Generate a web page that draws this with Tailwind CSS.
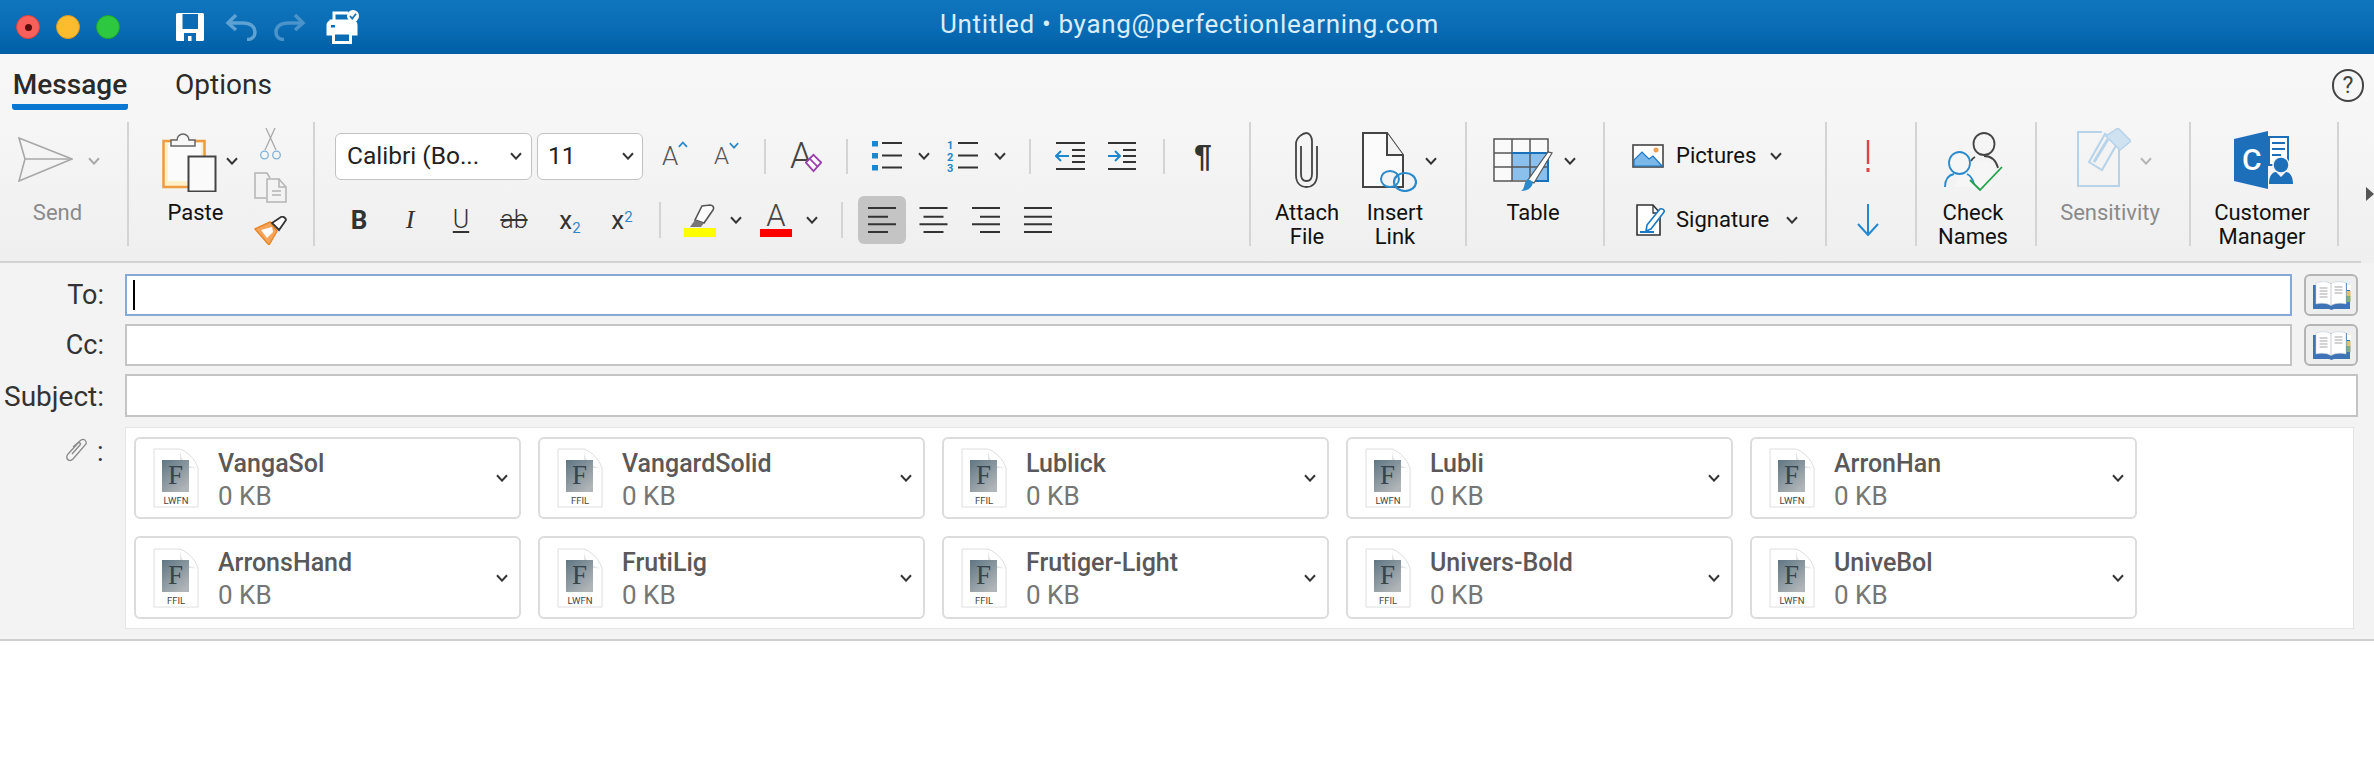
<!DOCTYPE html>
<html lang="en">
<head>
  <meta charset="UTF-8" />
  <title>Untitled • byang@perfectionlearning.com</title>
  <script src="https://cdn.jsdelivr.net/npm/@tailwindcss/browser@4"></script>
</head>
<body class="w-[2374px] h-[776px] overflow-hidden bg-white font-['Roboto',sans-serif] text-[#222]">

  <!-- shared icons -->
  <svg class="absolute w-0 h-0">
    <symbol id="chev" viewBox="0 0 12 8"><path d="M1 1.200 6 6.600 11 1.200" fill="none" stroke="currentColor" stroke-width="2"/></symbol>
    <symbol id="book" viewBox="0 0 39 29">
      <path d="M1 4h3v-2h31v2h3v24H22l-2.500 1-2.500-1H1z" fill="#3e74b5"/>
      <path d="M4 23V2c5-2 11-1.500 15 .5 4-2 10-2.500 15-.5v21c-5-1.500-11-1-15 1.500C15 22 9 21.500 4 23z" fill="#fff" stroke="#c8d0d8" stroke-width=".6"/>
      <path d="M19 2.500v22" stroke="#b9bec4" stroke-width=".8"/>
      <path d="M7.500 7h8M7.500 10h8M7.500 13h8M7.500 16h8M22.500 6h8M22.500 9h8M22.500 12h8" stroke="#c4c4c4" stroke-width="1.300"/>
      <rect x="35" y="4" width="4" height="5" fill="#fff"/><rect x="34.500" y="10" width="4" height="5" fill="#d8c46a"/><rect x="34.500" y="15" width="4" height="6" fill="#7fae7c"/>
    </symbol>
    <symbol id="align-left" viewBox="0 0 28 26"><path d="M0 1h28M0 9.700h20M0 17.300h28M0 25h20" stroke="#333" stroke-width="2"/></symbol>
    <symbol id="align-center" viewBox="0 0 28 26"><path d="M0 1h28M4 9.700h20M0 17.300h28M4 25h20" stroke="#333" stroke-width="2"/></symbol>
    <symbol id="align-right" viewBox="0 0 28 26"><path d="M0 1h28M8 9.700h20M0 17.300h28M8 25h20" stroke="#333" stroke-width="2"/></symbol>
    <symbol id="align-full" viewBox="0 0 28 26"><path d="M0 1h28M0 9.700h28M0 17.300h28M0 25h28" stroke="#333" stroke-width="2"/></symbol>
    <linearGradient id="fgrad" x1="0" y1="0" x2=".7" y2="1"><stop offset="0" stop-color="#5f7683"/><stop offset="1" stop-color="#b0b5b8"/></linearGradient>
  </svg>

  <!-- title bar -->
  <header class="relative h-[54px] flex items-center bg-gradient-to-b from-[#0f76bd] via-[#0a6cb5] to-[#005fa5]">
    <div class="flex items-center gap-[16px] ml-[16px]">
      <div class="w-[24px] h-[24px] rounded-full bg-[#f9605c] border border-[#d8403c] flex items-center justify-center"><div class="w-[7px] h-[7px] rounded-full bg-[#5a0d0a]"></div></div>
      <div class="w-[24px] h-[24px] rounded-full bg-[#fdbb2e] border border-[#d99a1e]"></div>
      <div class="w-[24px] h-[24px] rounded-full bg-[#2ec840] border border-[#1ca42e]"></div>
    </div>
    <!-- save -->
    <svg class="ml-[56px]" width="28" height="28" viewBox="0 0 28 28"><path d="M1.500 0h25A1.500 1.500 0 0 1 28 1.500V26.500A1.500 1.500 0 0 1 26.500 28H1.500A1.500 1.500 0 0 1 0 26.500V1.500A1.500 1.500 0 0 1 1.500 0z" fill="#fff"/><rect x="6.500" y="1" width="15.500" height="15" fill="#0b6cb5"/><rect x="8" y="20" width="12" height="8" fill="#0b6cb5"/><rect x="12" y="23" width="3.500" height="5" fill="#fff"/></svg>
    <!-- undo / redo -->
    <svg class="ml-[21px]" width="32" height="28" viewBox="0 0 32 28" fill="none" stroke="#5ea2d3" stroke-width="3.500"><path d="M11 2 3 10l8 7"/><path d="M3 10h15c7 0 12 3.500 12 9 0 5-3.500 7.500-8 7.500"/></svg>
    <svg class="ml-[17px]" width="32" height="28" viewBox="0 0 32 28" fill="none" stroke="#4a93cb" stroke-width="3.500"><path d="M21 2l8 8-8 7"/><path d="M29 10H14C7 10 2 13.500 2 19c0 5 3.500 7.500 8 7.500"/></svg>
    <!-- print -->
    <svg class="ml-[19px]" width="34" height="34" viewBox="0 0 34 34" fill="none" stroke="#fff" stroke-width="3"><path d="M9 11V3h14"/><path d="M6 11h21a4 4 0 0 1 4 4v9H3v-9a3 3 0 0 1 3-3z" fill="#fff"/><rect x="8.500" y="23" width="17" height="9.500" fill="#0a6cb5"/><rect x="6" y="15" width="4" height="2.500" fill="#0a6cb5" stroke="none"/><circle cx="28" cy="6" r="6" fill="#fff" stroke="none"/><path d="M25 6l2.200 2.500L31 3.800" stroke="#1673b8" stroke-width="1.800"/></svg>
    <div class="absolute left-[940px] top-[10px] text-[26px] leading-[28px] tracking-[.68px] text-[#d9edfb]">Untitled • byang@perfectionlearning.com</div>
  </header>

  <div class="bg-[#f3f3f3]">
    <!-- tabs -->
    <nav class="h-[68px] flex bg-gradient-to-b from-[#f7f7f7] to-[#f6f6f6]">
      <div class="ml-[12px] w-[116px] h-[56px] pt-[17px] border-b-[6px] border-[#0a78d0] rounded-b-[3px] text-[28px] leading-[28px] font-medium text-center text-[#2a2a2a]">Message</div>
      <div class="ml-[47px] pt-[17px] text-[28px] leading-[28px] text-[#2a2a2a]">Options</div>
      <div class="ml-auto mr-[10px] mt-[15px] w-[32px] h-[33px] rounded-full border-2 border-[#444] flex items-center justify-center text-[23px] text-[#444] leading-none">?</div>
    </nav>

    <!-- ribbon -->
    <section class="h-[141px] flex bg-gradient-to-b from-[#f6f6f6] to-[#efefef] text-[22px] leading-[24px] text-[#111]">
      <!-- send -->
      <div class="w-[129px] h-[124px] border-r-2 border-[#d4d4d4] flex flex-col">
        <div class="h-[79px] shrink-0 flex items-start pl-[18px] pt-[15px] text-[#a8a8a8]">
          <svg width="55" height="45" viewBox="0 0 55 45" fill="none" stroke="#a8a8a8" stroke-width="1.600"><path d="M1 1 54 22 1 44 7 22z"/><path d="M7 22h47"/></svg>
          <svg class="ml-[15px] mt-[20px]" width="12" height="8"><use href="#chev"/></svg>
        </div>
        <div class="w-[115px] text-center text-[#8a8a8a]">Send</div>
      </div>
      <!-- clipboard -->
      <div class="w-[186px] h-[124px] border-r-2 border-[#d4d4d4] flex">
        <div class="w-[125px] pl-[33px] flex flex-col">
          <div class="h-[79px] shrink-0 flex items-start pt-[10px]">
            <svg width="55" height="60" viewBox="0 0 55 60"><rect x="1.500" y="9" width="41" height="46" fill="#fdf1cc" stroke="#ee9a3f" stroke-width="2.500"/><rect x="6" y="11" width="33" height="38" fill="#fbfbfb"/><path d="M9 14V8h6a6 6 0 0 1 12 0h6v6z" fill="#f7f7f7" stroke="#666" stroke-width="1.500"/><rect x="26.500" y="24.500" width="27" height="35" fill="#fafafa" stroke="#444" stroke-width="2"/></svg>
            <svg class="ml-[9px] mt-[25px] text-[#333]" width="12" height="8"><use href="#chev"/></svg>
          </div>
          <div class="w-[67px] text-center">Paste</div>
        </div>
        <div class="flex flex-col pt-[6px]">
          <svg class="ml-[6px] shrink-0" width="21" height="32" viewBox="0 0 21 32" fill="none" stroke-width="1.300"><path d="M5 22 15 0M16 22 6 0" stroke="#aaa"/><circle cx="4.500" cy="27" r="3.800" stroke="#7fb2da"/><circle cx="16.500" cy="27" r="3.800" stroke="#7fb2da"/></svg>
          <svg class="mt-[12px] shrink-0" width="33" height="31" viewBox="0 0 33 31" fill="none" stroke="#b4b4b4" stroke-width="1.500"><path d="M12 26H1V1h12l3 5"/><path d="M13 7h12l7 8v15H13z" fill="#f3f3f3"/><path d="M25 7v8h7M18 19h9M18 23h9" /></svg>
          <svg class="mt-[13px] shrink-0" width="33" height="29" viewBox="0 0 33 29"><path d="M1 13 16 6l7 9-8 14z" fill="#f4a55b" stroke="#e9872a" stroke-width="1.500"/><path d="M7 14l11-3 1 5-6 6z" fill="#fff"/><path d="M18 7 27 1c2-1 5 1 5 3l-7 10z" fill="#fff" stroke="#333" stroke-width="1.800"/></svg>
        </div>
      </div>
      <!-- font / paragraph -->
      <div class="w-[936px] h-[124px] border-r-2 border-[#d4d4d4] pl-[20px] flex flex-col">
        <div class="h-[68px] shrink-0 flex items-center">
          <div class="w-[197px] h-[47px] rounded-[6px] bg-white border border-[#c2c2c2] flex items-center pl-[11px] pr-[9px] text-[24.500px] text-[#222]">Calibri (Bo...<svg class="ml-auto text-[#333]" width="12" height="8"><use href="#chev"/></svg></div>
          <div class="ml-[5px] w-[106px] h-[47px] rounded-[6px] bg-white border border-[#c2c2c2] flex items-center pl-[10px] pr-[8px] text-[24.500px] text-[#222]">11<svg class="ml-auto text-[#333]" width="12" height="8"><use href="#chev"/></svg></div>
          <div class="ml-[19px] w-[26px] flex items-start text-[#555] text-[26px] font-light leading-none">A<svg class="mt-[-2px] text-[#2b8acb]" width="10" height="7" viewBox="0 0 12 8"><path d="M1 7 6 1.500 11 7" fill="none" stroke="currentColor" stroke-width="2.200"/></svg></div>
          <div class="ml-[26px] w-[26px] flex items-start text-[#555] text-[24px] font-light leading-none">A<svg class="mt-[-2px] text-[#2b8acb]" width="10" height="7"><use href="#chev"/></svg></div>
          <div class="ml-[24px] w-[2px] h-[35px] bg-[#d4d4d4]"></div>
          <div class="relative ml-[24px] w-[32px] h-[34px] text-[#444] text-[36px] font-light leading-[34px]">A<svg class="absolute left-[15px] top-[14px]" width="17" height="20" viewBox="0 0 20 21"><path d="M10 1 19 10 10 20 1 10z" fill="#fff" stroke="#9a3fb0" stroke-width="2.200"/><path d="M6 6l9 9" stroke="#9a3fb0" stroke-width="2"/></svg></div>
          <div class="ml-[24px] w-[2px] h-[35px] bg-[#d4d4d4]"></div>
          <!-- bullets -->
          <svg class="ml-[24px]" width="30" height="32" viewBox="0 0 30 32"><path d="M0 1h6v5.500H0zM0 13h6v5.500H0zM0 25h6v5.500H0z" fill="#1d86cc"/><path d="M10 3h20M10 15.500h20M10 27.500h20" stroke="#333" stroke-width="2"/></svg>
          <svg class="ml-[16px] text-[#333]" width="12" height="8"><use href="#chev"/></svg>
          <svg class="ml-[17px] mt-[6px]" width="31" height="38" viewBox="0 0 31 38"><text x="0" y="9" font-size="11" font-weight="700" font-family="Roboto" fill="#1d86cc">1</text><text x="0" y="21" font-size="11" font-weight="700" font-family="Roboto" fill="#1d86cc">2</text><text x="0" y="32" font-size="11" font-weight="700" font-family="Roboto" fill="#1d86cc">3</text><path d="M11 3h20M11 15.500h20M11 27.500h20" stroke="#333" stroke-width="2"/></svg>
          <svg class="ml-[16px] text-[#333]" width="12" height="8"><use href="#chev"/></svg>
          <div class="ml-[23px] w-[2px] h-[35px] bg-[#d4d4d4]"></div>
          <!-- indent -->
          <svg class="ml-[24px]" width="30" height="28" viewBox="0 0 30 28"><path d="M1 1h29M17 14h13M17 8h13M17 20h13M1 27h29" stroke="#333" stroke-width="2"/><path d="M14 14H1M6 9l-5 5 5 5" fill="none" stroke="#1d86cc" stroke-width="2"/></svg>
          <svg class="ml-[23px]" width="28" height="28" viewBox="0 0 28 28"><path d="M0 1h28M15 14h13M15 8h13M15 20h13M0 27h28" stroke="#333" stroke-width="2"/><path d="M0 14h12M7 9l5 5-5 5" fill="none" stroke="#1d86cc" stroke-width="2"/></svg>
          <div class="ml-[27px] w-[2px] h-[35px] bg-[#d4d4d4]"></div>
          <div class="ml-[26px] w-[24px] text-center text-[32px] leading-none font-bold text-[#333] font-['Liberation_Sans',sans-serif]">¶</div>
        </div>
        <div class="h-[60px] shrink-0 flex items-center text-[#333]">
          <div class="ml-[5px] w-[38px] text-center text-[26px] font-bold">B</div>
          <div class="ml-[13px] w-[38px] text-center text-[26px] italic font-['Liberation_Serif',serif]">I</div>
          <div class="ml-[13px] w-[38px] text-center text-[25px] font-light underline underline-offset-[3px]">U</div>
          <div class="ml-[15px] w-[38px] text-center text-[25px] font-light line-through">ab</div>
          <div class="ml-[18px] w-[38px] text-center text-[26px]">x<sub class="text-[15px] text-[#2b8acb]">2</sub></div>
          <div class="ml-[14px] w-[38px] text-center text-[26px]">x<sup class="text-[15px] text-[#2b8acb]">2</sup></div>
          <div class="ml-[18px] w-[2px] h-[36px] bg-[#d4d4d4]"></div>
          <svg class="ml-[23px]" width="32" height="33" viewBox="0 0 32 33"><path d="M18 2 26 1c2 0 5 2 3 5l-9 13-9-3z" fill="#fff" stroke="#555" stroke-width="1.600"/><path d="M11 16l9 3-3 4-11 0z" fill="#777"/><rect x="0" y="24" width="32" height="9" fill="#ffff00"/></svg>
          <svg class="ml-[14px]" width="12" height="8"><use href="#chev"/></svg>
          <div class="ml-[18px] w-[32px] flex flex-col items-center text-[31px] font-light leading-[26px] text-[#444]">A<div class="w-[32px] h-[8px] bg-[#ff0000]"></div></div>
          <svg class="ml-[14px]" width="12" height="8"><use href="#chev"/></svg>
          <div class="ml-[23px] w-[2px] h-[36px] bg-[#d4d4d4]"></div>
          <div class="ml-[15px] w-[48px] h-[48px] rounded-[6px] bg-[#c4c4c4] flex items-center justify-center"><svg width="28" height="26"><use href="#align-left"/></svg></div>
          <svg class="ml-[13px]" width="29" height="26"><use href="#align-center"/></svg>
          <svg class="ml-[24px]" width="28" height="26"><use href="#align-right"/></svg>
          <svg class="ml-[24px]" width="28" height="26"><use href="#align-full"/></svg>
        </div>
      </div>
      <!-- attach / link -->
      <div class="w-[216px] h-[124px] border-r-2 border-[#d4d4d4] flex pl-[16px]">
        <div class="w-[88px] flex flex-col">
          <div class="h-[79px] shrink-0 pt-[10px] pl-[28px]"><svg width="23" height="56" viewBox="0 0 23 56" fill="none" stroke="#444" stroke-width="1.800"><path d="M6 14v28c0 5 2.500 7 5.500 7s5.500-2 5.500-7V9C17 5 14.500 1 11.500 1S1 5 1 12v31c0 8 4.500 12 10.500 12S22 51 22 43V14"/></svg></div>
          <div class="w-[80px] text-center">Attach<br>File</div>
        </div>
        <div class="w-[90px] flex flex-col">
          <div class="h-[79px] shrink-0 pt-[10px] pl-[7px] flex items-start">
            <svg width="55" height="60" viewBox="0 0 55 60" fill="none"><path d="M1 1h24l16 22v32H1z" fill="#fbfbfb" stroke="#444" stroke-width="2"/><path d="M25 1v22h16" stroke="#444" stroke-width="2" fill="#f3f3f3"/><ellipse cx="28" cy="47" rx="9" ry="8" fill="#f3f3f3" stroke="#2b8acb" stroke-width="2"/><ellipse cx="43" cy="50" rx="11" ry="9" fill="none" stroke="#2b8acb" stroke-width="2.200"/></svg>
            <svg class="ml-[8px] mt-[25px] text-[#333]" width="12" height="8"><use href="#chev"/></svg>
          </div>
          <div class="w-[80px] text-center">Insert<br>Link</div>
        </div>
      </div>
      <!-- table -->
      <div class="w-[138px] h-[124px] border-r-2 border-[#d4d4d4] pl-[26px] flex flex-col">
        <div class="h-[79px] shrink-0 pt-[16px] flex items-start">
          <svg width="61" height="54" viewBox="0 0 61 54"><rect x="1" y="1" width="54" height="42" fill="#fafafa"/><rect x="19" y="15" width="35" height="27" fill="#8cc0ec"/><path d="M1 1h54v42H1zM19 1v42M37 1v42M1 15h54M1 29h54" fill="none" stroke="#555" stroke-width="1.500"/><path d="M19 15h36v28H37" fill="none" stroke="#1b70ba" stroke-width="2"/><path d="M59 15 41 45l-6-3L55 14z" fill="#fff" stroke="#555" stroke-width="1.200"/><path d="M28 53c5 0 11-2 12-9l-5-3c-5 3-2 9-7 12z" fill="#2b8acb"/></svg>
          <svg class="ml-[10px] mt-[19px] text-[#333]" width="12" height="8"><use href="#chev"/></svg>
        </div>
        <div class="w-[80px] text-center">Table</div>
      </div>
      <!-- pictures / signature -->
      <div class="w-[222px] h-[124px] border-r-2 border-[#d4d4d4] flex flex-col">
        <div class="h-[68px] shrink-0 flex items-center pl-[27px]">
          <svg width="32" height="24" viewBox="0 0 32 24"><rect x="1" y="1" width="30" height="22" fill="#fff" stroke="#444" stroke-width="1.600"/><path d="M2 22V16l8-8 7 7 4-3 9 10z" fill="#7ab8ea" stroke="#1d78c4" stroke-width="1.200"/><circle cx="24" cy="6" r="2.500" fill="#f0a050"/></svg>
          <span class="ml-[12px]">Pictures</span>
          <svg class="ml-[14px] text-[#333]" width="12" height="8"><use href="#chev"/></svg>
        </div>
        <div class="h-[60px] shrink-0 flex items-center pl-[31px]">
          <svg width="29" height="32" viewBox="0 0 29 32"><path d="M1 1h16l7 8v22H1z" fill="#fff" stroke="#333" stroke-width="1.600"/><path d="M17 1v8h7" fill="none" stroke="#333" stroke-width="1.300"/><path d="M11 21 24 5c2-1 5 1 4 3L15 25l-5 2z" fill="#fff" stroke="#1d78c4" stroke-width="1.600"/><path d="M4 28h14" stroke="#1d78c4" stroke-width="2"/></svg>
          <span class="ml-[11px]">Signature</span>
          <svg class="ml-[17px] text-[#333]" width="12" height="8"><use href="#chev"/></svg>
        </div>
      </div>
      <!-- importance -->
      <div class="w-[90px] h-[124px] border-r-2 border-[#d4d4d4] flex flex-col pl-[30px]">
        <div class="h-[68px] shrink-0 flex items-center"><svg width="22" height="32" viewBox="0 0 22 32"><path d="M11 0v24" stroke="#e04343" stroke-width="2.400"/><path d="M11 28v4" stroke="#e04343" stroke-width="3"/></svg></div>
        <div class="h-[60px] shrink-0 flex items-center"><svg width="22" height="32" viewBox="0 0 22 32" fill="none" stroke="#2288cf" stroke-width="2"><path d="M11 0v31M1 20l10 11 10-11"/></svg></div>
      </div>
      <!-- check names -->
      <div class="w-[120px] h-[124px] border-r-2 border-[#d4d4d4] flex flex-col">
        <div class="w-[112px] h-[79px] shrink-0 pt-[10px] flex justify-center">
          <svg width="59" height="60" viewBox="0 0 59 60" fill="none"><ellipse cx="40" cy="12" rx="10.500" ry="11" stroke="#444" stroke-width="1.800"/><path d="M26 33c8-6 22-6 26 4l-5 9-8 9H10l6-12z" fill="#f6f6f6"/><path d="M40 24c7 0 12 4 14 12M31 25c-2 1-3 2-4 4" stroke="#444" stroke-width="1.800"/><ellipse cx="15.500" cy="31" rx="10.500" ry="11" fill="#f6f6f6" stroke="#2b8acb" stroke-width="1.800"/><path d="M1 55c0-8 4-12 9-13M30 52c-1-5-3-8-7-10" stroke="#2b8acb" stroke-width="1.800"/><path d="M26 48l10 10L58 35" stroke="#1fa24a" stroke-width="1.800"/></svg>
        </div>
        <div class="w-[112px] text-center">Check<br>Names</div>
      </div>
      <!-- sensitivity -->
      <div class="w-[154px] h-[124px] border-r-2 border-[#d4d4d4] flex flex-col">
        <div class="h-[79px] shrink-0 pl-[40px] pt-[6px] flex items-start">
          <svg width="54" height="60" viewBox="0 0 54 60" fill="none" stroke="#b6d3ea" stroke-width="2"><path d="M42 20v38H1V4h24"/><path d="M24 5 34 0l8 15-18 31-14-9z" fill="#f3f3f3" stroke="none"/><path d="M12 34 28 6l13 8-16 28z"/><path d="M17 34 31 11" stroke-width="3"/><path d="M29 8 41 0l13 13-11 9z" fill="#cfe2f1" stroke-width="1.500"/></svg>
          <svg class="ml-[9px] mt-[29px] text-[#b4b4b4]" width="12" height="8"><use href="#chev"/></svg>
        </div>
        <div class="w-[146px] text-center text-[#8a8a8a]">Sensitivity</div>
      </div>
      <!-- customer manager -->
      <div class="w-[148px] h-[124px] border-r-2 border-[#d4d4d4] flex flex-col">
        <div class="w-[144px] h-[79px] shrink-0 pt-[9px] flex justify-center">
          <svg width="59" height="58" viewBox="0 0 59 58"><path d="M35 6h19v28H35z" fill="#fff" stroke="#1e6fba" stroke-width="2"/><path d="M38 12h13M38 18h13M38 24h9" stroke="#1e6fba" stroke-width="2"/><path d="M0 8 34 0v58L0 50z" fill="#1e6fba"/><text x="8" y="39" font-size="30" font-weight="500" font-family="Roboto" fill="#fff">C</text><circle cx="47" cy="34" r="8" fill="#1e6fba" stroke="#f3f3f3" stroke-width="1.500"/><path d="M35 53c0-9 4-12 7-12l5 5 5-5c3 0 7 3 7 12z" fill="#1e6fba"/></svg>
        </div>
        <div class="w-[142px] text-center">Customer<br>Manager</div>
      </div>
      <svg class="ml-[27px] mt-[65px]" width="8" height="14" viewBox="0 0 8 14"><path d="M0 0 8 7 0 14z" fill="#555"/></svg>
    </section>
    <div class="w-[2361px] h-[2px] mt-[-2px] relative bg-[#d2d2d2]"></div>

    <!-- address fields -->
    <div class="pt-[11px] pb-[10px] border-b-2 border-[#cfcfcf] flex flex-col gap-[8px] text-[27px] leading-[32px] text-[#333]">
      <div class="flex items-center">
        <div class="w-[104px] text-right">To:</div>
        <div class="ml-[21px] w-[2167px] h-[42px] bg-white border-2 border-[#86a9d6] flex items-center pl-[6px]"><div class="w-[2px] h-[30px] bg-black"></div></div>
        <button class="ml-[12px] w-[54px] h-[42px] rounded-[6px] bg-[#eeeeee] border-2 border-[#b4b4b4] flex items-center justify-center"><svg width="39" height="29"><use href="#book"/></svg></button>
      </div>
      <div class="flex items-center">
        <div class="w-[104px] text-right">Cc:</div>
        <div class="ml-[21px] w-[2167px] h-[42px] bg-white border-2 border-[#c4c4c4]"></div>
        <button class="ml-[12px] w-[54px] h-[42px] rounded-[6px] bg-[#eeeeee] border-2 border-[#b4b4b4] flex items-center justify-center"><svg width="39" height="29"><use href="#book"/></svg></button>
      </div>
      <div class="flex items-center">
        <div class="w-[104px] text-right text-[28px] mt-[3px]">Subject:</div>
        <div class="ml-[21px] w-[2233px] h-[43px] bg-white border-2 border-[#c4c4c4]"></div>
      </div>
      <div class="flex items-start mt-[2px]">
        <div class="w-[104px] h-[32px] mt-[9px] flex items-center justify-end gap-[9px]">
          <svg class="mt-[-4px]" width="22" height="25" viewBox="0 0 22 25" fill="none" stroke="#888" stroke-width="1.300"><path d="M7 9 15 2c3-2 6 1 5 4L7 21c-3 3-7 1-6-3 0-1 1-2 2-3l9-10c2-1 3 1 2 2L6 16"/></svg>
          <span class="w-[7px] leading-none">:</span>
        </div>
        <div id="attachments" class="ml-[21px] w-[2229px] h-[202px] bg-white border border-[#e4e4e4] pl-[8px] pt-[9px] grid grid-cols-[repeat(5,387px)] grid-rows-[82px_83px] gap-x-[17px] gap-y-[17px]"></div>
      </div>
    </div>
  </div>

  <script>
    const files = [
      ['VangaSol', 'LWFN'], ['VangardSolid', 'FFIL'], ['Lublick', 'FFIL'], ['Lubli', 'LWFN'], ['ArronHan', 'LWFN'],
      ['ArronsHand', 'FFIL'], ['FrutiLig', 'LWFN'], ['Frutiger-Light', 'FFIL'], ['Univers-Bold', 'FFIL'], ['UniveBol', 'LWFN']
    ];
    document.getElementById('attachments').innerHTML = files.map(([name, type]) => `
      <div class="rounded-[6px] border-2 border-[#dcdcdc] flex items-center pl-[17px] pr-[11px]">
        <svg class="mt-[1px] shrink-0" width="46" height="61" viewBox="0 0 46 61">
          <path d="M1 1h26c8 3 15 10 18 19v39H1z" fill="#fff" stroke="#dedede"/>
          <path d="M27 1c0 8 4 18 18 19-8 1-14-1-18-5z" fill="#e6e6e6"/>
          <rect x="9" y="12" width="27" height="32" fill="url(#fgrad)"/>
          <text x="22.500" y="36" text-anchor="middle" font-size="27" font-family="Liberation Serif" fill="#37444c">F</text>
          <text x="23" y="56" text-anchor="middle" font-size="9.500" font-family="Roboto" fill="#444">${type}</text>
        </svg>
        <div class="ml-[19px] mt-[3px]">
          <div class="text-[25px] leading-[32px] font-medium text-[#5a5858]">${name}</div>
          <div class="text-[26px] leading-[32px] text-[#767676]">0 KB</div>
        </div>
        <svg class="ml-auto text-[#333]" width="12" height="8"><use href="#chev"/></svg>
      </div>`).join('');
  </script>
</body>
</html>
